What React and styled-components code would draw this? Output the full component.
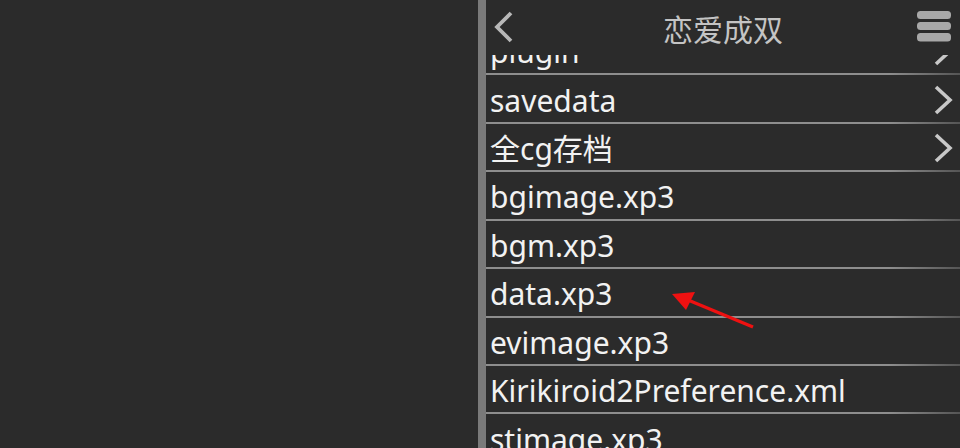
import styled, { createGlobalStyle } from 'styled-components';

const GlobalStyle = createGlobalStyle`
  html, body {
    margin: 0;
    padding: 0;
    background: #2b2b2b;
    overflow: hidden;
  }
`;

const Screen = styled.div`
  display: flex;
  width: 960px;
  height: 448px;
  background: #2b2b2b;
  font-family: "Noto Sans", "Open Sans", "Noto Sans CJK SC", sans-serif;
  position: relative;
  overflow: hidden;
`;

const EmptySide = styled.div`
  width: 478px;
  flex-shrink: 0;
`;

const Divider = styled.div`
  width: 8px;
  flex-shrink: 0;
  background: #7a7a7a;
`;

const Panel = styled.div`
  flex: 1;
  display: flex;
  flex-direction: column;
  min-width: 0;
`;

const Header = styled.div`
  height: 55px;
  flex-shrink: 0;
  display: flex;
  align-items: flex-start;
  justify-content: space-between;
  padding: 10px 8px 0 6px;
  box-sizing: border-box;
  background: #2b2b2b;
  position: relative;
  z-index: 1;
`;

const Title = styled.div`
  position: absolute;
  left: 0;
  right: 0;
  top: 8px;
  text-align: center;
  font-family: "Noto Sans CJK SC", sans-serif;
  font-size: 30px;
  line-height: 40px;
  color: #c4c4c4;
  pointer-events: none;
`;

const IconButton = styled.div`
  display: flex;
  align-items: center;
  position: relative;
  z-index: 2;
`;

const Viewport = styled.div`
  flex: 1;
  overflow: hidden;
`;

const List = styled.div`
  display: flex;
  flex-direction: column;
`;

const Row = styled.div`
  height: 48.43px;
  box-sizing: border-box;
  display: flex;
  align-items: center;
  justify-content: space-between;
  padding: 0 7px 0 4px;
  position: relative;
  &::after {
    content: '';
    position: absolute;
    left: 0;
    right: 0;
    bottom: 0;
    height: 2px;
    background: linear-gradient(to right, #8e8e8e 0%, #8e8e8e 85%, #555 100%);
  }
`;

const Name = styled.span`
  font-size: 30px;
  line-height: 40px;
  color: #f2f2f2;
  white-space: nowrap;
  margin-top: 2px;
`;

const Arrow = styled.svg`
  position: absolute;
  left: 0;
  top: 0;
  pointer-events: none;
`;

const ChevronRight = () => (
  <svg width="20" height="32" viewBox="0 0 20 32">
    <path d="M3 3 L17 16 L3 29" fill="none" stroke="#c8c8c8" strokeWidth="3.6" />
  </svg>
);

const files = [
  { name: 'plugin', dir: true },
  { name: 'savedata', dir: true },
  { name: '全cg存档', dir: true },
  { name: 'bgimage.xp3' },
  { name: 'bgm.xp3' },
  { name: 'data.xp3' },
  { name: 'evimage.xp3' },
  { name: 'Kirikiroid2Preference.xml' },
  { name: 'stimage.xp3' },
];

export default function App() {
  const scroll = 28;
  return (
    <>
      <GlobalStyle />
      <Screen>
        <EmptySide />
        <Divider />
        <Panel>
          <Header>
            <IconButton>
              <svg width="24" height="34" viewBox="0 0 24 34">
                <path d="M19 3 L5 17 L19 31" fill="none" stroke="#b8b8b8" strokeWidth="3.8" />
              </svg>
            </IconButton>
            <Title>恋爱成双</Title>
            <IconButton>
              <svg width="36" height="34" viewBox="0 0 36 34">
                <rect x="1" y="1" width="34" height="8" rx="3.5" fill="#a8a8a8" />
                <rect x="1" y="12" width="34" height="8" rx="3.5" fill="#a8a8a8" />
                <rect x="1" y="23" width="34" height="8.5" rx="3.5" fill="#a8a8a8" />
              </svg>
            </IconButton>
          </Header>
          <Viewport>
            <List style={{ marginTop: -scroll }}>
              {files.map((f) => (
                <Row key={f.name}>
                  <Name>{f.name}</Name>
                  {f.dir && <ChevronRight />}
                </Row>
              ))}
            </List>
          </Viewport>
        </Panel>
        <Arrow width="960" height="448" viewBox="0 0 960 448">
          <line x1="753" y1="327" x2="688" y2="300" stroke="#ee1111" strokeWidth="3.2" />
          <polygon points="672,294 695,292 686,310" fill="#ee1111" />
        </Arrow>
      </Screen>
    </>
  );
}
